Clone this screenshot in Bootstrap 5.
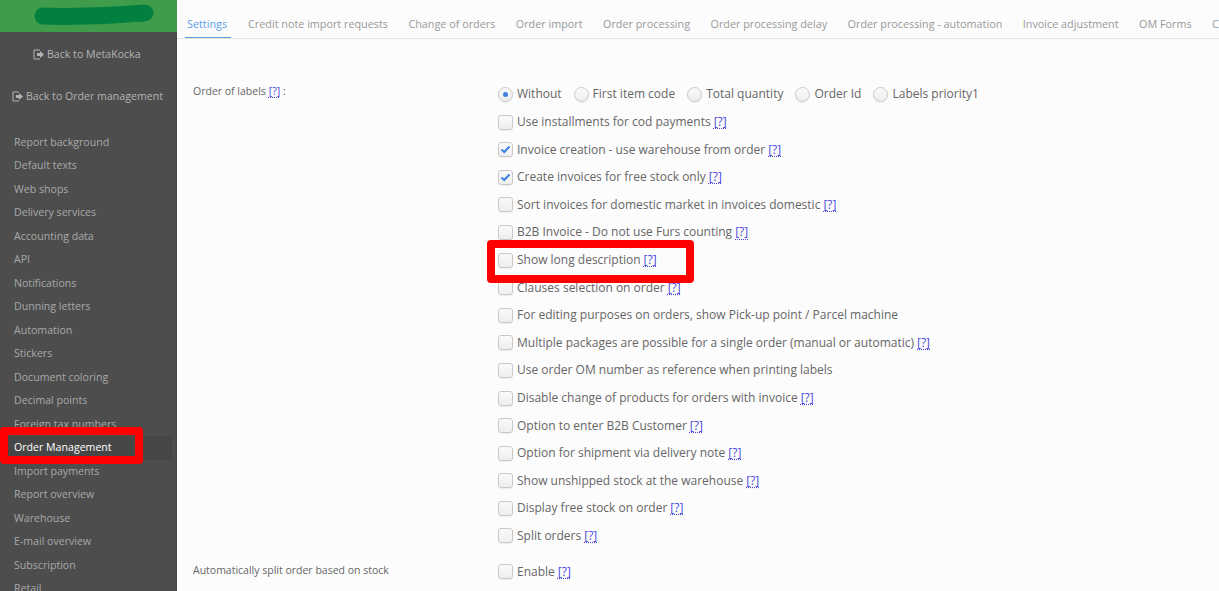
<!DOCTYPE html>
<html lang="en"><head><meta charset="utf-8"><title>Settings</title>
<link href="https://cdn.jsdelivr.net/npm/bootstrap@5.3.0/dist/css/bootstrap.min.css" rel="stylesheet">
<style>
html,body{height:591px;overflow:hidden}
body{font-family:"Open Sans",sans-serif;font-size:12px;color:#666;background:#fcfcfc}
.shell{height:591px;overflow:hidden}
.side{width:177px;background:#4d4d4d;flex:none;height:591px;overflow:hidden;box-shadow:inset -2px 0 2px -1px #444}
.brand{height:32px;background:#3e9c4b}
.blob{display:block;margin-left:33px;padding-top:4px}
.backlink{color:#b3b3b3;font-size:10.6px;line-height:16px;text-decoration:none;white-space:nowrap}
.back1{height:42px;padding-top:13px;padding-left:33px}
.back2{height:42px;padding-top:13px;padding-left:12px;margin-bottom:14.6px}
.back1 svg,.back2 svg{margin-right:3px;vertical-align:-2px}
.sitem{display:block;color:#a8a8a8;height:23.5px;line-height:23.5px;padding-left:14px;font-size:10.6px;text-decoration:none;white-space:nowrap;width:172px}
.sitem.on{color:#fff;background:#474747}
.main{flex:1;min-width:0;overflow:hidden}
.tabbar{height:39px;border-bottom:1px solid #e3e3e3;padding-left:8px;white-space:nowrap;gap:13.5px;flex-wrap:nowrap;width:1042px;overflow:hidden}
.tabi{display:block;flex:none;color:#999;font-size:10.8px;line-height:15px;padding:16px 4px 7px 3px;text-decoration:none;height:39px}
.tabi.on{color:#5a9ee8;border-bottom:2px solid #5a9ee8;padding-left:2px;padding-right:4px;margin-right:.5px}
.formarea{padding-top:41.7px}
.lab{width:321px;flex:none;padding-left:16px}
.lab .optrow{font-size:10.5px;height:auto;line-height:24px}
.lab .optrow.toplab{line-height:21px}
.opts{flex:1;min-width:0}
.optrow{height:27.6px;display:flex;align-items:center;white-space:nowrap;font-size:12px;color:#666}
.box{width:15px;height:15px;border:1px solid #c9c9c9;border-radius:3px;background:linear-gradient(#fafafa,#eee);flex:none;margin-right:4px;display:inline-flex;align-items:center;justify-content:center;box-shadow:0 1px 1px rgba(0,0,0,.06)}
.rad{border-radius:50%}
.dot{width:5px;height:5px;border-radius:50%;background:#3b82e0}
.radset{margin-right:12px;display:flex;align-items:center}
a.qm{color:#4a4ae0;text-decoration:underline dotted;text-underline-offset:2px;margin-left:3px}
.hl{position:absolute;border:8px solid #f00;border-radius:4px;pointer-events:none}
.hl1{left:0;top:427px;width:143px;height:37px}
.hl2{left:487px;top:240px;width:207px;height:43px}
.gapy{height:8.3px}
</style></head><body>
<div class="shell d-flex position-relative">
<nav class="side">
<div class="brand"><svg class="blob" width="122" height="25" viewBox="0 0 122 21"><path d="M10 12C30 13 60 12 80 11S105 9 112 9" fill="none" stroke="#028040" stroke-width="17" stroke-linecap="round"/></svg></div>
<div class="back1"><a class="backlink" href="#"><svg width="11" height="11" viewBox="0 0 11 11"><path d="M7 1H1v9h6" fill="none" stroke="#b3b3b3"/><path d="M4 4h3V2l4 3.500L7 9V7H4z" fill="#b3b3b3"/></svg>Back to MetaKocka</a></div>
<div class="back2"><a class="backlink" href="#"><svg width="11" height="11" viewBox="0 0 11 11"><path d="M7 1H1v9h6" fill="none" stroke="#b3b3b3"/><path d="M4 4h3V2l4 3.500L7 9V7H4z" fill="#b3b3b3"/></svg>Back to Order management</a></div>
<a class="sitem" href="#">Report background</a>
<a class="sitem" href="#">Default texts</a>
<a class="sitem" href="#">Web shops</a>
<a class="sitem" href="#">Delivery services</a>
<a class="sitem" href="#">Accounting data</a>
<a class="sitem" href="#">API</a>
<a class="sitem" href="#">Notifications</a>
<a class="sitem" href="#">Dunning letters</a>
<a class="sitem" href="#">Automation</a>
<a class="sitem" href="#">Stickers</a>
<a class="sitem" href="#">Document coloring</a>
<a class="sitem" href="#">Decimal points</a>
<a class="sitem" href="#">Foreign tax numbers</a>
<a class="sitem on" href="#">Order Management</a>
<a class="sitem" href="#">Import payments</a>
<a class="sitem" href="#">Report overview</a>
<a class="sitem" href="#">Warehouse</a>
<a class="sitem" href="#">E-mail overview</a>
<a class="sitem" href="#">Subscription</a>
<a class="sitem" href="#">Retail</a>
</nav>
<main class="main">
<div class="tabbar d-flex">
<a class="tabi on" href="#">Settings</a>
<a class="tabi" href="#">Credit note import requests</a>
<a class="tabi" href="#">Change of orders</a>
<a class="tabi" href="#">Order import</a>
<a class="tabi" href="#">Order processing</a>
<a class="tabi" href="#">Order processing delay</a>
<a class="tabi" href="#">Order processing - automation</a>
<a class="tabi" href="#">Invoice adjustment</a>
<a class="tabi" href="#">OM Forms</a>
<a class="tabi" href="#">Custom</a>
</div>
<div class="formarea">
<div class="d-flex">
<div class="lab"><div class="optrow toplab">Order of labels <a class="qm" href="#">[?]</a>&nbsp;:</div></div>
<div class="opts">
<div class="optrow">
<span class="radset"><span class="box rad"><span class="dot"></span></span>Without</span>
<span class="radset"><span class="box rad"></span>First item code</span>
<span class="radset"><span class="box rad"></span>Total quantity</span>
<span class="radset"><span class="box rad"></span>Order Id</span>
<span class="radset"><span class="box rad"></span>Labels priority1</span>
</div>
<div class="optrow"><span class="box"></span>Use installments for cod payments <a class="qm" href="#">[?]</a></div>
<div class="optrow"><span class="box"><svg width="11" height="9" viewBox="0 0 11 9"><path d="M1.500 4.500 4.200 7 9.500 1.500" fill="none" stroke="#3b82e0" stroke-width="2"/></svg></span>Invoice creation - use warehouse from order <a class="qm" href="#">[?]</a></div>
<div class="optrow"><span class="box"><svg width="11" height="9" viewBox="0 0 11 9"><path d="M1.500 4.500 4.200 7 9.500 1.500" fill="none" stroke="#3b82e0" stroke-width="2"/></svg></span>Create invoices for free stock only <a class="qm" href="#">[?]</a></div>
<div class="optrow"><span class="box"></span>Sort invoices for domestic market in invoices domestic <a class="qm" href="#">[?]</a></div>
<div class="optrow"><span class="box"></span>B2B Invoice - Do not use Furs counting <a class="qm" href="#">[?]</a></div>
<div class="optrow"><span class="box"></span>Show long description <a class="qm" href="#">[?]</a></div>
<div class="optrow"><span class="box"></span>Clauses selection on order <a class="qm" href="#">[?]</a></div>
<div class="optrow"><span class="box"></span>For editing purposes on orders, show Pick-up point / Parcel machine</div>
<div class="optrow"><span class="box"></span>Multiple packages are possible for a single order (manual or automatic) <a class="qm" href="#">[?]</a></div>
<div class="optrow"><span class="box"></span>Use order OM number as reference when printing labels</div>
<div class="optrow"><span class="box"></span>Disable change of products for orders with invoice <a class="qm" href="#">[?]</a></div>
<div class="optrow"><span class="box"></span>Option to enter B2B Customer <a class="qm" href="#">[?]</a></div>
<div class="optrow"><span class="box"></span>Option for shipment via delivery note <a class="qm" href="#">[?]</a></div>
<div class="optrow"><span class="box"></span>Show unshipped stock at the warehouse <a class="qm" href="#">[?]</a></div>
<div class="optrow"><span class="box"></span>Display free stock on order <a class="qm" href="#">[?]</a></div>
<div class="optrow"><span class="box"></span>Split orders <a class="qm" href="#">[?]</a></div>
</div></div>
<div class="gapy"></div>
<div class="d-flex">
<div class="lab"><div class="optrow">Automatically split order based on stock</div></div>
<div class="opts"><div class="optrow"><span class="box"></span>Enable <a class="qm" href="#">[?]</a></div></div>
</div>
</div>
</main>
<div class="hl hl1"></div><div class="hl hl2"></div>
</div>
<script src="https://cdn.jsdelivr.net/npm/bootstrap@5.3.0/dist/js/bootstrap.bundle.min.js"></script>
</body></html>
